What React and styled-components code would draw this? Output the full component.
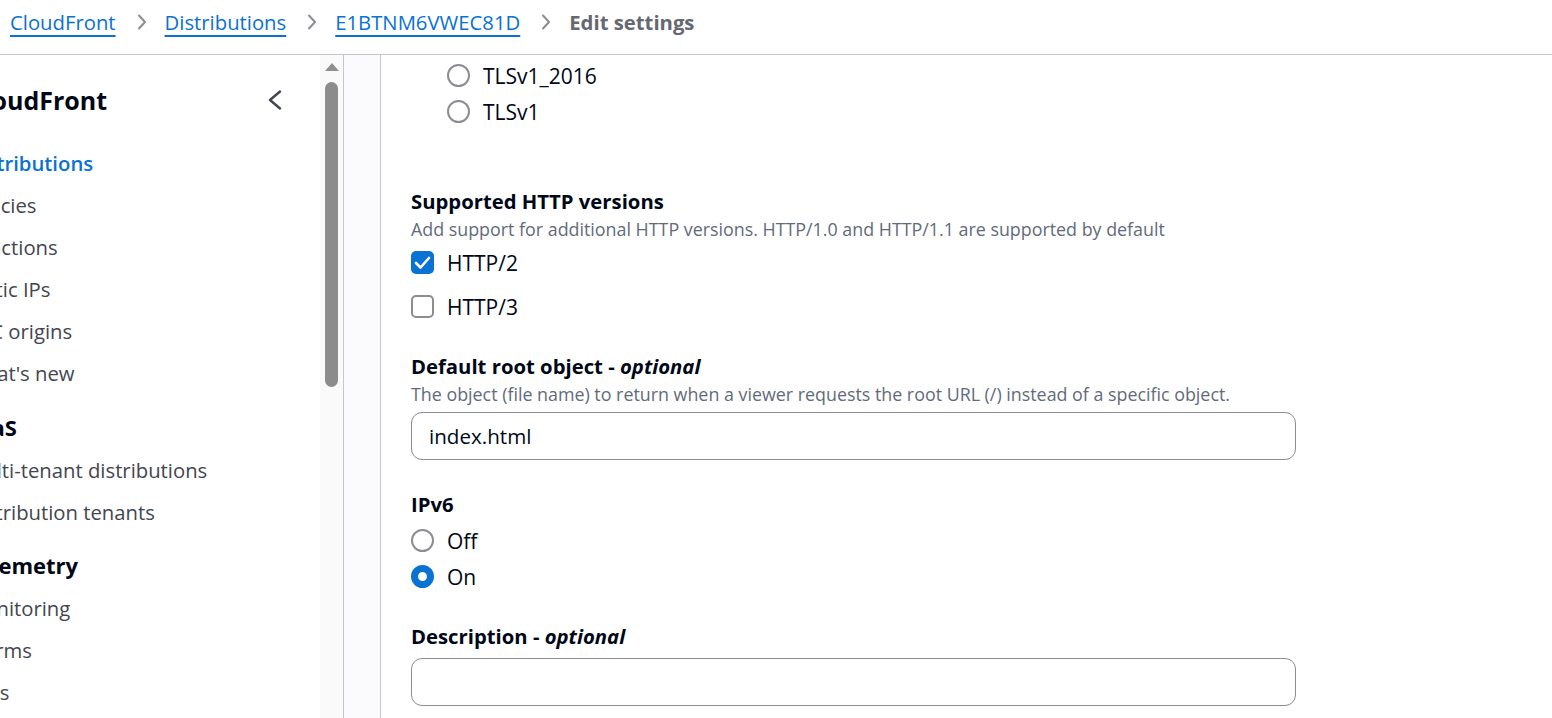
import React from "react";
import styled, { createGlobalStyle } from "styled-components";

const Global = createGlobalStyle`
  html, body { margin: 0; padding: 0; background: #ffffff; }
  body {
    font-family: "Open Sans", "Noto Sans", Arial, sans-serif;
    width: 1552px;
    height: 718px;
    overflow: hidden;
  }
  * { box-sizing: border-box; }
`;

const Page = styled.div`
  display: flex;
  flex-direction: column;
  height: 718px;
`;

const TopBar = styled.nav`
  height: 55px;
  flex-shrink: 0;
  border-bottom: 1px solid #c6c6cd;
  display: flex;
  align-items: flex-start;
  padding: 8px 0 0 10px;
`;

const Crumb = styled.a`
  font-size: 20.3px;
  line-height: 28px;
  color: #0972d3;
  text-decoration: underline;
  text-decoration-thickness: 2px;
  text-underline-offset: 5px;
  cursor: pointer;
`;

const CurrentCrumb = styled.span`
  font-size: 20.3px;
  line-height: 28px;
  font-weight: 700;
  color: #656871;
`;

const Sep = styled.span`
  display: flex;
  align-items: center;
  height: 28px;
  margin: 0 18px 0 21px;
`;

const Body = styled.div`
  display: flex;
  flex: 1;
  min-height: 0;
`;

const Sidebar = styled.aside`
  width: 320px;
  flex-shrink: 0;
  overflow: hidden;
`;

const SideInner = styled.div`
  width: 354px;
  margin-left: -34px;
  padding-top: 29px;
`;

const SideHeader = styled.div`
  display: flex;
  align-items: center;
  justify-content: space-between;
  height: 32px;
  padding-right: 37px;
`;

const SideTitle = styled.h2`
  margin: 0 0 0 ${(p) => p.$shift}px;
  font-size: 25px;
  line-height: 32px;
  font-weight: 700;
  color: #000716;
  white-space: nowrap;
`;

const NavList = styled.ul`
  list-style: none;
  margin: ${(p) => p.$mt}px 0 0;
  padding: 0;
`;

const NavItem = styled.li`
  height: 42px;
  line-height: 42px;
  font-size: 20.3px;
  white-space: nowrap;
  font-weight: ${(p) => (p.$active ? 600 : 400)};
  color: ${(p) => (p.$active ? "#0972d3" : "#424650")};
`;

const SectionTitle = styled.li`
  height: 42px;
  line-height: 40px;
  margin-top: ${(p) => p.$mt}px;
  font-size: 22px;
  font-weight: 700;
  color: #000716;
  white-space: nowrap;
`;

const ScrollTrack = styled.div`
  width: 23px;
  flex-shrink: 0;
  background: #fafafa;
  display: flex;
  flex-direction: column;
  align-items: center;
`;

const ScrollArrow = styled.div`
  margin-top: 8px;
  width: 0;
  height: 0;
  border-left: 7.5px solid transparent;
  border-right: 7.5px solid transparent;
  border-bottom: 8px solid #8f8f8f;
`;

const ScrollThumb = styled.div`
  margin-top: 11px;
  width: 13px;
  height: 305px;
  background: #8c8c8c;
  border-radius: 7px;
`;

const Gutter = styled.div`
  width: 38px;
  flex-shrink: 0;
  background: #fbfbfd;
  border-left: 1px solid #c6c6cd;
  border-right: 1px solid #c6c6cd;
`;

const Main = styled.main`
  flex: 1;
  padding: 2px 0 0 30px;
`;

const Form = styled.div`
  width: 885px;
  display: flex;
  flex-direction: column;
`;

const Field = styled.div`
  margin-top: ${(p) => p.$mt || 0}px;
  display: flex;
  flex-direction: column;
`;

const Label = styled.div`
  font-size: 20.3px;
  line-height: 26px;
  padding-bottom: 2px;
  font-weight: 700;
  color: #000716;
  em {
    font-style: italic;
  }
`;

const Description = styled.div`
  font-size: 17.85px;
  line-height: 24px;
  padding-top: 1px;
  color: #5f6b7a;
`;

const Group = styled.div`
  display: flex;
  flex-direction: column;
  margin-top: ${(p) => p.$mt || 0}px;
  margin-left: ${(p) => p.$indent || 0}px;
`;

const OptionRow = styled.label`
  display: flex;
  align-items: center;
  gap: 13px;
  height: ${(p) => p.$h}px;
  color: #000716;
`;

const OptionText = styled.span`
  font-size: 21px;
  line-height: 28px;
  padding-top: 2px;
`;

const RadioCircle = styled.span`
  width: 23px;
  height: 23px;
  border-radius: 50%;
  flex-shrink: 0;
  border: ${(p) => (p.$checked ? "7px solid #0972d3" : "2px solid #8c8c94")};
  background: #ffffff;
`;

const CheckBox = styled.span`
  width: 23px;
  height: 23px;
  border-radius: 5px;
  flex-shrink: 0;
  display: flex;
  align-items: center;
  justify-content: center;
  border: ${(p) => (p.$checked ? "none" : "2px solid #8c8c94")};
  background: ${(p) => (p.$checked ? "#0972d3" : "#ffffff")};
`;

const TextInput = styled.input`
  margin-top: ${(p) => p.$mt}px;
  width: 100%;
  height: 48px;
  border: 1px solid #8c8c94;
  border-radius: 11px;
  padding: 0 17px;
  font-family: inherit;
  font-size: 20.6px;
  color: #000716;
  background: #ffffff;
  outline: none;
`;

const Chevron = () => (
  <svg width="10" height="16" viewBox="0 0 10 16" fill="none">
    <path d="M2 1.5 L8 8 L2 14.5" stroke="#8c8c94" strokeWidth="2" strokeLinecap="round" strokeLinejoin="round" />
  </svg>
);

const CollapseIcon = () => (
  <svg width="16" height="20" viewBox="0 0 16 20" fill="none">
    <path d="M13 1.5 L3 10 L13 18.5" stroke="#424650" strokeWidth="2.4" strokeLinecap="round" strokeLinejoin="round" />
  </svg>
);

const CheckMark = () => (
  <svg width="23" height="23" viewBox="0 0 23 23" fill="none">
    <path d="M5 12 L9.5 16.5 L18 7" stroke="#ffffff" strokeWidth="2.6" strokeLinecap="round" strokeLinejoin="round" />
  </svg>
);

const Radio = ({ checked, children }) => (
  <OptionRow $h={36}>
    <RadioCircle $checked={checked} />
    <OptionText>{children}</OptionText>
  </OptionRow>
);

const Checkbox = ({ checked, children }) => (
  <OptionRow $h={44}>
    <CheckBox $checked={checked}>{checked && <CheckMark />}</CheckBox>
    <OptionText>{children}</OptionText>
  </OptionRow>
);

export default function App() {
  return (
    <Page>
      <Global />
      <TopBar>
        <Crumb>CloudFront</Crumb>
        <Sep><Chevron /></Sep>
        <Crumb>Distributions</Crumb>
        <Sep><Chevron /></Sep>
        <Crumb>E1BTNM6VWEC81D</Crumb>
        <Sep><Chevron /></Sep>
        <CurrentCrumb>Edit settings</CurrentCrumb>
      </TopBar>
      <Body>
        <Sidebar>
          <SideInner>
            <SideHeader>
              <SideTitle $shift={2}>CloudFront</SideTitle>
              <CollapseIcon />
            </SideHeader>
            <NavList $mt={26}>
              <NavItem $active>Distributions</NavItem>
              <NavItem>Policies</NavItem>
              <NavItem>Functions</NavItem>
              <NavItem>Static IPs</NavItem>
              <NavItem>VPC origins</NavItem>
              <NavItem>What's new</NavItem>
              <SectionTitle $mt={13}>SaaS</SectionTitle>
              <NavItem>Multi-tenant distributions</NavItem>
              <NavItem>Distribution tenants</NavItem>
              <SectionTitle $mt={12}>Telemetry</SectionTitle>
              <NavItem>Monitoring</NavItem>
              <NavItem>Alarms</NavItem>
              <NavItem>Logs</NavItem>
            </NavList>
          </SideInner>
        </Sidebar>
        <ScrollTrack>
          <ScrollArrow />
          <ScrollThumb />
        </ScrollTrack>
        <Gutter />
        <Main>
          <Form>
            <Group $indent={36}>
              <Radio>TLSv1_2016</Radio>
              <Radio>TLSv1</Radio>
            </Group>

            <Field $mt={59}>
              <Label>Supported HTTP versions</Label>
              <Description>Add support for additional HTTP versions. HTTP/1.0 and HTTP/1.1 are supported by default</Description>
              <Group $mt={-1}>
                <Checkbox checked>HTTP/2</Checkbox>
                <Checkbox>HTTP/3</Checkbox>
              </Group>
            </Field>

            <Field $mt={25}>
              <Label>Default root object - <em>optional</em></Label>
              <Description>The object (file name) to return when a viewer requests the root URL (/) instead of a specific object.</Description>
              <TextInput $mt={6} readOnly value="index.html" />
            </Field>

            <Field $mt={31}>
              <Label>IPv6</Label>
              <Group $mt={3}>
                <Radio>Off</Radio>
                <Radio checked>On</Radio>
              </Group>
            </Field>

            <Field $mt={29}>
              <Label>Description - <em>optional</em></Label>
              <TextInput $mt={7} readOnly value="" />
            </Field>
          </Form>
        </Main>
      </Body>
    </Page>
  );
}
